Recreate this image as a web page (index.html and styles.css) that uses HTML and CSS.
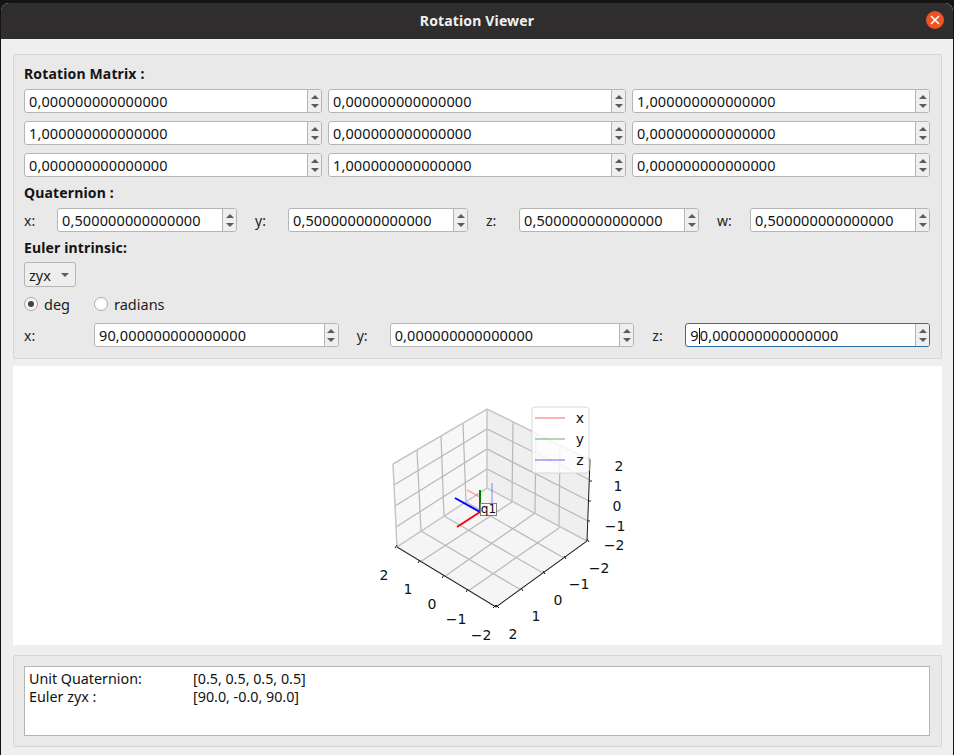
FILE: index.html
```html
<!DOCTYPE html>
<html lang="en">
<head>
<meta charset="utf-8">
<title>Rotation Viewer</title>
<link rel="stylesheet" href="styles.css">
</head>
<body>
<div class="window">
  <header class="titlebar">
    <span class="title">Rotation Viewer</span>
    <span class="close"><svg width="10" height="10" viewBox="0 0 10 10"><path d="M1 1L9 9M9 1L1 9" stroke="#fff" stroke-width="1.6" fill="none"/></svg></span>
  </header>
  <main class="content">
    <section class="group controls">
      <div class="heading">Rotation Matrix :</div>
      <div class="matrix">
        <div class="spin"><div class="val">0,000000000000000</div><div class="btns"><i class="up"></i><i class="down"></i></div></div>
        <div class="spin"><div class="val">0,000000000000000</div><div class="btns"><i class="up"></i><i class="down"></i></div></div>
        <div class="spin"><div class="val">1,000000000000000</div><div class="btns"><i class="up"></i><i class="down"></i></div></div>
        <div class="spin"><div class="val">1,000000000000000</div><div class="btns"><i class="up"></i><i class="down"></i></div></div>
        <div class="spin"><div class="val">0,000000000000000</div><div class="btns"><i class="up"></i><i class="down"></i></div></div>
        <div class="spin"><div class="val">0,000000000000000</div><div class="btns"><i class="up"></i><i class="down"></i></div></div>
        <div class="spin"><div class="val">0,000000000000000</div><div class="btns"><i class="up"></i><i class="down"></i></div></div>
        <div class="spin"><div class="val">1,000000000000000</div><div class="btns"><i class="up"></i><i class="down"></i></div></div>
        <div class="spin"><div class="val">0,000000000000000</div><div class="btns"><i class="up"></i><i class="down"></i></div></div>
      </div>
      <div class="heading h2">Quaternion :</div>
      <div class="quat">
        <div class="field"><span class="lab">x:</span><div class="spin"><div class="val">0,500000000000000</div><div class="btns"><i class="up"></i><i class="down"></i></div></div></div>
        <div class="field"><span class="lab">y:</span><div class="spin"><div class="val">0,500000000000000</div><div class="btns"><i class="up"></i><i class="down"></i></div></div></div>
        <div class="field"><span class="lab">z:</span><div class="spin"><div class="val">0,500000000000000</div><div class="btns"><i class="up"></i><i class="down"></i></div></div></div>
        <div class="field"><span class="lab">w:</span><div class="spin"><div class="val">0,500000000000000</div><div class="btns"><i class="up"></i><i class="down"></i></div></div></div>
      </div>
      <div class="heading h2">Euler intrinsic:</div>
      <div class="combo"><span>zyx</span><i class="combo-arrow"></i></div>
      <div class="radios">
        <label class="radio r-deg"><i class="dot on"></i><span>deg</span></label>
        <label class="radio"><i class="dot"></i><span>radians</span></label>
      </div>
      <div class="euler">
        <div class="field wide"><span class="lab lab-wide">x:</span><div class="spin"><div class="val">90,000000000000000</div><div class="btns"><i class="up"></i><i class="down"></i></div></div></div>
        <div class="field narrow"><span class="lab">y:</span><div class="spin"><div class="val">0,000000000000000</div><div class="btns"><i class="up"></i><i class="down"></i></div></div></div>
        <div class="field narrow"><span class="lab">z:</span><div class="spin focus"><div class="val">9<span class="caret"></span>0,000000000000000</div><div class="btns"><i class="up"></i><i class="down"></i></div></div></div>
      </div>
    </section>

    <section class="plot">
      <svg class="plot-svg" width="929" height="279" viewBox="13 366 929 279">
        <polygon class="wall-l" points="393,464 487,409 487,488 397,547"/>
        <polygon class="wall-r" points="487,409 590,460 587,541 487,488"/>
        <polygon class="floor" points="397,547 487,488 587,541 496,607"/>
        <g class="grid">
          <path d="M420,562L512,502M444,577L535,513M468,591L559,528"/>
          <path d="M521,590L421,531M543,573L444,516M564,558L466,502"/>
          <path d="M394,485L487,429L590,480M395,506L487,449L589,501M396,527L487,469L588,521"/>
          <path d="M417,450L421,531M441,436L444,516M463,423L466,502"/>
          <path d="M513,422L512,502M536,433L535,513M560,445L559,528"/>
        </g>
        <path class="edge" d="M393,464L487,409L590,460M393,464L397,547L487,488L587,541M487,409V488M397,547L496,607L587,541"/>
        <path class="axis" d="M590,460L587,541L496,607L397,547"/>
        <path class="axis thin" d="M420,560l-2,3M444,575l-2,3M468,589l-2,3M521,588l2,3M543,571l2,3M564,556l2,3M397,545l-2,3M496,605l-3,3M496,605l3,3M587,539l2,3M590,460l-2,-3M590,481l2,0M589,501l2,0M588,521l2,0"/>

        <path class="ax-r light" d="M467,490L480,497"/>
        <path class="ax-b light" d="M492,483V507"/>
        <path class="ax-r" d="M480,512L457,527"/>
        <path class="ax-b" d="M480,512L455,498"/>
        <path class="ax-g" d="M480,512V490"/>
        <rect class="note" x="480.5" y="503.5" width="16" height="12"/>
        <text class="tick q1" x="488.500" y="509">q1</text>

        <rect class="legend" x="532" y="407" width="57" height="66" rx="3"/>
        <path class="leg-r" d="M535,418H565"/>
        <path class="leg-g" d="M535,439H565"/>
        <path class="leg-b" d="M535,460H565"/>
        <text class="tick" x="580" y="418">x</text>
        <text class="tick" x="580" y="439">y</text>
        <text class="tick" x="580" y="460">z</text>

        <text class="tick" x="619" y="466">2</text>
        <text class="tick" x="618" y="486">1</text>
        <text class="tick" x="617" y="506">0</text>
        <text class="tick" x="615" y="526">−1</text>
        <text class="tick" x="614" y="545">−2</text>

        <text class="tick" x="384" y="575">2</text>
        <text class="tick" x="408" y="589">1</text>
        <text class="tick" x="432" y="604">0</text>
        <text class="tick" x="456" y="619">−1</text>
        <text class="tick" x="481" y="635">−2</text>

        <text class="tick" x="599" y="568">−2</text>
        <text class="tick" x="579" y="584">−1</text>
        <text class="tick" x="558" y="600">0</text>
        <text class="tick" x="536" y="616">1</text>
        <text class="tick" x="513" y="634">2</text>
      </svg>
    </section>

    <section class="group output">
      <div class="textbox">
        <div class="line"><span>Unit Quaternion:</span><span>[0.5, 0.5, 0.5, 0.5]</span></div>
        <div class="line"><span>Euler zyx :</span><span>[90.0, -0.0, 90.0]</span></div>
      </div>
    </section>
  </main>
</div>
</body>
</html>
```

FILE: styles.css
```css
* { box-sizing: border-box; }
html, body { margin: 0; height: 100%; }
body {
  background: #141414;
  overflow: hidden;
  font-family: "Noto Sans", "Open Sans", sans-serif;
  font-size: 14px;
  color: #1c1c1c;
}
.window {
  width: 952px;
  height: 752px;
  margin: 3px 0 0 1px;
  border-radius: 8px 8px 0 0;
  overflow: hidden;
  background: #efefef;
  display: flex;
  flex-direction: column;
}
.titlebar {
  height: 36px;
  background: #2f2d2d;
  display: flex;
  align-items: center;
  justify-content: center;
  position: relative;
  flex: none;
}
.title {
  color: #f0f0f0;
  font-weight: 700;
  font-size: 14px;
  letter-spacing: 0.15px;
  margin-top: -2px;
}
.close {
  position: absolute;
  right: 9px;
  top: 8px;
  width: 18px;
  height: 18px;
  border-radius: 50%;
  background: #ec5425;
  display: flex;
  align-items: center;
  justify-content: center;
}
.content {
  flex: 1;
  padding: 15px 11px 0 12px;
  display: flex;
  flex-direction: column;
}
.group {
  background: #e9e9e9;
  border: 1px solid #d6d6d6;
  border-radius: 2px;
  padding-left: 10px;
  padding-right: 11px;
}
.controls {
  height: 305px;
  padding-top: 9px;
  flex: none;
}
.heading {
  height: 20px;
  line-height: 20px;
  font-weight: 700;
  font-size: 14px;
  letter-spacing: 0.15px;
  margin-bottom: 5px;
  color: #141414;
}
.h2 { margin-top: 6px; }
.h2 + .combo { margin-top: -1px; }
.matrix {
  display: grid;
  grid-template-columns: repeat(3, 298px);
  column-gap: 6px;
  row-gap: 8px;
}
.spin {
  height: 24px;
  flex: 1;
  min-width: 0;
  display: flex;
  background: #fff;
  border: 1px solid #b5b5b5;
  border-radius: 3px;
  overflow: hidden;
}
.spin.focus { border-color: #2f6ea3; }
.val {
  flex: 1;
  min-width: 0;
  padding-left: 4px;
  line-height: 22px;
  font-size: 14.5px;
  letter-spacing: 0.12px;
  color: #111;
  white-space: nowrap;
}
.caret {
  display: inline-block;
  width: 0;
  height: 16px;
  border-left: 1px solid #111;
  vertical-align: -3px;
}
.btns {
  width: 14px;
  flex: none;
  background: #efefef;
  border-left: 1px solid #b5b5b5;
  display: flex;
  flex-direction: column;
  align-items: center;
  justify-content: center;
  gap: 5px;
}
.up, .down {
  display: block;
  width: 0;
  height: 0;
  border-left: 4px solid transparent;
  border-right: 4px solid transparent;
}
.up { border-bottom: 4px solid #5c5c5c; }
.down { border-top: 4px solid #5c5c5c; }
.quat { display: flex; gap: 18px; }
.field { flex: 1; display: flex; align-items: center; min-width: 0; }
.lab { width: 33px; flex: none; color: #222; }
.lab-wide { width: 70px; }
.combo {
  width: 52px;
  height: 25px;
  background: #eeeeee;
  border: 1px solid #b5b5b5;
  border-radius: 3px;
  display: flex;
  align-items: center;
  padding-left: 4px;
  font-size: 14.5px;
  position: relative;
}
.combo-arrow {
  position: absolute;
  right: 6px;
  top: 10px;
  width: 0;
  height: 0;
  border-left: 4px solid transparent;
  border-right: 4px solid transparent;
  border-top: 4px solid #5c5c5c;
}
.radios {
  display: flex;
  align-items: center;
  height: 20px;
  margin-top: 7px;
}
.radio { display: flex; align-items: center; gap: 6px; font-size: 14.5px; }
.r-deg { width: 70px; }
.dot {
  width: 14px;
  height: 14px;
  border-radius: 50%;
  background: #fff;
  border: 1px solid #aaa;
  position: relative;
  flex: none;
}
.dot.on { background: #f4f4f4; }
.dot.on::after {
  content: "";
  position: absolute;
  left: 3px;
  top: 3px;
  width: 6px;
  height: 6px;
  border-radius: 50%;
  background: #444;
}
.euler { display: flex; gap: 18px; margin-top: 9px; }
.euler .wide { flex: 315 1 0; }
.euler .narrow { flex: 278 1 0; }
.plot {
  margin-top: 7px;
  height: 279px;
  background: #fff;
  flex: none;
}
.plot-svg { display: block; }
.wall-l { fill: #f7f7f7; }
.wall-r { fill: #efefef; }
.floor { fill: #f5f5f5; }
.grid path { fill: none; stroke: #b8b8b8; stroke-width: 1.2; }
.edge { fill: none; stroke: #c6c6c6; stroke-width: 1.5; }
.axis { fill: none; stroke: #1a1a1a; stroke-width: 1; }
.ax-r, .ax-g, .ax-b { fill: none; stroke-width: 2; }
.ax-r { stroke: #ff0000; }
.ax-g { stroke: #008000; }
.ax-b { stroke: #0000ff; }
.light { opacity: 0.3; stroke-width: 1.5; }
.note { fill: #ffffff; fill-opacity: 0.7; stroke: #808080; stroke-width: 1; }
.legend { fill: #ffffff; fill-opacity: 0.8; stroke: #d8d8d8; stroke-width: 1; }
.leg-r, .leg-g, .leg-b { fill: none; stroke-width: 2; opacity: 0.3; }
.leg-r { stroke: #ff0000; }
.leg-g { stroke: #008000; }
.leg-b { stroke: #0000ff; }
.tick {
  font-family: "DejaVu Sans", sans-serif;
  font-size: 14px;
  fill: #111;
  text-anchor: middle;
  dominant-baseline: central;
}
.q1 { font-size: 12px; }
.output {
  margin-top: 10px;
  height: 92px;
  padding-top: 10px;
  flex: none;
}
.textbox {
  height: 70px;
  background: #fff;
  border: 1px solid #b5b5b5;
  padding: 3px 4px;
  font-size: 14.3px;
  line-height: 18px;
  color: #111;
}
.line { display: grid; grid-template-columns: 164px 1fr; }
```
